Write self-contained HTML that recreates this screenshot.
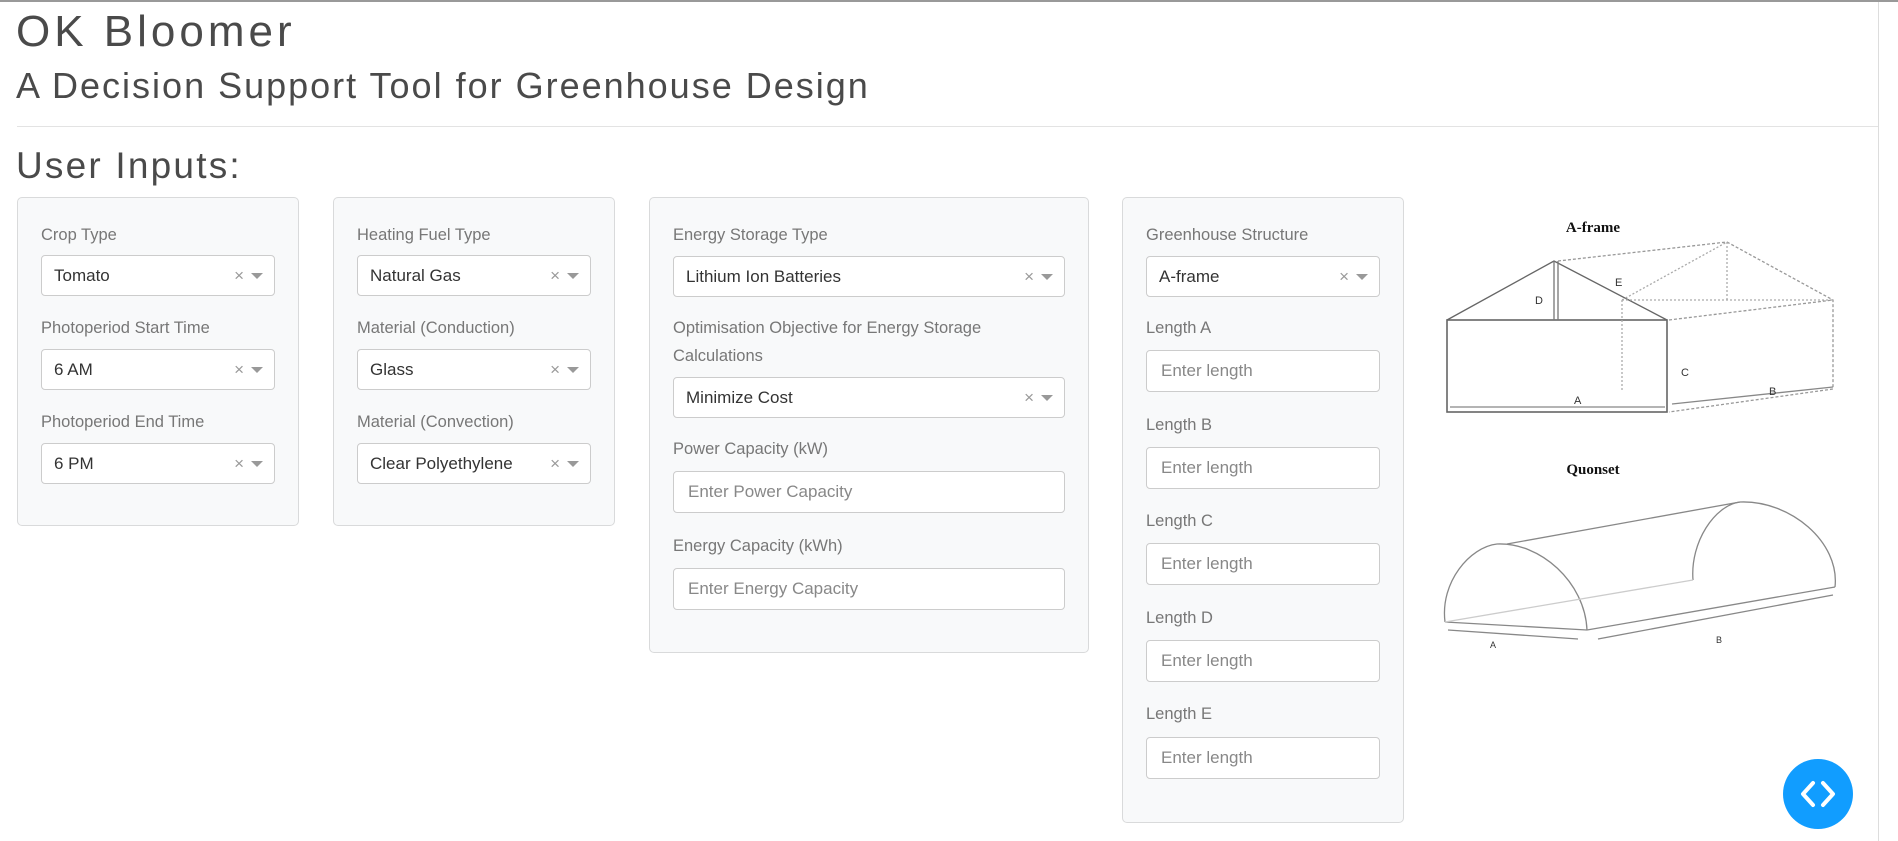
<!DOCTYPE html>
<html><head><meta charset="utf-8"><style>
*{box-sizing:border-box;margin:0;padding:0}
body{width:1898px;height:839px;overflow:hidden;background:#fff;font-family:"Liberation Sans",sans-serif;position:relative;border-top:2px solid #999}
.abs{position:absolute}
h1{position:absolute;left:16px;top:5px;font-size:44px;font-weight:normal;color:#4a4a4a;letter-spacing:4px}
h2{position:absolute;left:16px;top:63px;font-size:36px;font-weight:normal;color:#4a4a4a;letter-spacing:2px}
h3{position:absolute;left:16px;top:143px;font-size:37px;font-weight:normal;color:#4a4a4a;letter-spacing:2.2px}
.hr{position:absolute;left:17px;top:124px;width:1861px;height:1px;background:#e3e3e3}
.card{position:absolute;background:#f8f9fa;border:1px solid #d9dadb;border-radius:5px;top:195px}
.lbl{position:absolute;font-size:16.5px;color:#777;line-height:28px}
.sel,.inp{position:absolute;height:41px;background:#fff;border:1px solid #ccc;border-radius:4px;font-size:17px;color:#333;line-height:39px;padding-left:12px}
.inp{color:#888;height:42px;line-height:40px;padding-left:14px}
.sel .x{position:absolute;right:30px;top:0;color:#999;font-size:17px}
.sel .c{position:absolute;right:11px;top:17px;width:0;height:0;border-left:6px solid transparent;border-right:6px solid transparent;border-top:6px solid #999}
</style></head><body>
<h1>OK Bloomer</h1>
<h2>A Decision Support Tool for Greenhouse Design</h2>
<div class="hr"></div>
<h3>User Inputs:</h3>
<div class="abs" style="left:1878px;top:0;width:1px;height:839px;background:#ddd"></div>

<div class="card" style="left:17px;width:282px;height:329px">
<div class="lbl" style="left:23px;top:23px">Crop Type</div>
<div class="sel" style="left:23px;top:57px;width:234px">Tomato<span class="x">×</span><span class="c"></span></div>
<div class="lbl" style="left:23px;top:116px">Photoperiod Start Time</div>
<div class="sel" style="left:23px;top:151px;width:234px">6 AM<span class="x">×</span><span class="c"></span></div>
<div class="lbl" style="left:23px;top:210px">Photoperiod End Time</div>
<div class="sel" style="left:23px;top:245px;width:234px">6 PM<span class="x">×</span><span class="c"></span></div>
</div>

<div class="card" style="left:333px;width:282px;height:329px">
<div class="lbl" style="left:23px;top:23px">Heating Fuel Type</div>
<div class="sel" style="left:23px;top:57px;width:234px">Natural Gas<span class="x">×</span><span class="c"></span></div>
<div class="lbl" style="left:23px;top:116px">Material (Conduction)</div>
<div class="sel" style="left:23px;top:151px;width:234px">Glass<span class="x">×</span><span class="c"></span></div>
<div class="lbl" style="left:23px;top:210px">Material (Convection)</div>
<div class="sel" style="left:23px;top:245px;width:234px">Clear Polyethylene<span class="x">×</span><span class="c"></span></div>
</div>

<div class="card" style="left:649px;width:440px;height:456px">
<div class="lbl" style="left:23px;top:23px">Energy Storage Type</div>
<div class="sel" style="left:23px;top:58px;width:392px">Lithium Ion Batteries<span class="x">×</span><span class="c"></span></div>
<div class="lbl" style="left:23px;top:116px;width:360px">Optimisation Objective for Energy Storage Calculations</div>
<div class="sel" style="left:23px;top:179px;width:392px">Minimize Cost<span class="x">×</span><span class="c"></span></div>
<div class="lbl" style="left:23px;top:237px">Power Capacity (kW)</div>
<div class="inp" style="left:23px;top:273px;width:392px">Enter Power Capacity</div>
<div class="lbl" style="left:23px;top:334px">Energy Capacity (kWh)</div>
<div class="inp" style="left:23px;top:370px;width:392px">Enter Energy Capacity</div>
</div>

<div class="card" style="left:1122px;width:282px;height:626px">
<div class="lbl" style="left:23px;top:23px">Greenhouse Structure</div>
<div class="sel" style="left:23px;top:58px;width:234px">A-frame<span class="x">×</span><span class="c"></span></div>
<div class="lbl" style="left:23px;top:116px">Length A</div>
<div class="inp" style="left:23px;top:152px;width:234px">Enter length</div>
<div class="lbl" style="left:23px;top:213px">Length B</div>
<div class="inp" style="left:23px;top:249px;width:234px">Enter length</div>
<div class="lbl" style="left:23px;top:309px">Length C</div>
<div class="inp" style="left:23px;top:345px;width:234px">Enter length</div>
<div class="lbl" style="left:23px;top:406px">Length D</div>
<div class="inp" style="left:23px;top:442px;width:234px">Enter length</div>
<div class="lbl" style="left:23px;top:502px">Length E</div>
<div class="inp" style="left:23px;top:539px;width:234px">Enter length</div>
</div>

<svg class="abs" style="left:0;top:0" width="1898" height="839">
<g fill="none" stroke="#777" stroke-width="1.3">
<text x="1593" y="230" text-anchor="middle" font-family="Liberation Serif" font-weight="bold" font-size="15" fill="#111" stroke="none">A-frame</text>
<rect x="1447" y="318" width="220" height="92" stroke="#666" stroke-width="1.6"/>
<path d="M1447 318 L1554 259 L1667 318" stroke="#666"/>
<path d="M1554 259 L1554 318 M1558 259 L1558 318"/>
<path d="M1558 259 L1727 240 L1833 298 L1833 387 L1669 410 M1669 318 L1833 298" stroke="#999" stroke-dasharray="3,2"/>
<path d="M1622 298 L1833 298 M1727 240 L1727 298 M1622 298 L1727 240 M1622 298 L1622 390" stroke="#aaa" stroke-dasharray="2,2"/>
<path d="M1450 405 L1665 405 M1672 402 L1833 385" stroke="#888"/>
<text x="1535" y="302" font-size="11" fill="#333" stroke="none">D</text>
<text x="1615" y="284" font-size="11" fill="#333" stroke="none">E</text>
<text x="1681" y="374" font-size="11" fill="#333" stroke="none">C</text>
<text x="1574" y="402" font-size="11" fill="#333" stroke="none">A</text>
<text x="1769" y="393" font-size="11" fill="#333" stroke="none">B</text>
<text x="1593" y="472" text-anchor="middle" font-family="Liberation Serif" font-weight="bold" font-size="15" fill="#111" stroke="none">Quonset</text>
<path d="M1445 620 C1440 580 1470 545 1497 542 C1540 540 1585 580 1587 628" stroke="#888"/>
<path d="M1693 578 C1690 540 1715 503 1740 500 C1790 498 1840 540 1835 585" stroke="#888"/>
<path d="M1507 542 L1740 500 M1587 628 L1835 585 M1445 620 L1587 628" stroke="#888"/>
<path d="M1445 620 L1693 578" stroke="#ccc"/>
<path d="M1448 628 L1578 637 M1598 637 L1833 593" stroke="#888"/>
<text x="1490" y="646" font-size="9" fill="#333" stroke="none">A</text>
<text x="1716" y="641" font-size="9" fill="#333" stroke="none">B</text>
</g>
</svg>

<div class="abs" style="left:1783px;top:757px;width:70px;height:70px;border-radius:50%;background:#119dff"></div>
<svg class="abs" style="left:1783px;top:757px" width="70" height="70"><path d="M30 24 L20 35 L30 46 M40 24 L50 35 L40 46" fill="none" stroke="#fff" stroke-width="4" stroke-linecap="round" stroke-linejoin="round"/></svg>
</body></html>
